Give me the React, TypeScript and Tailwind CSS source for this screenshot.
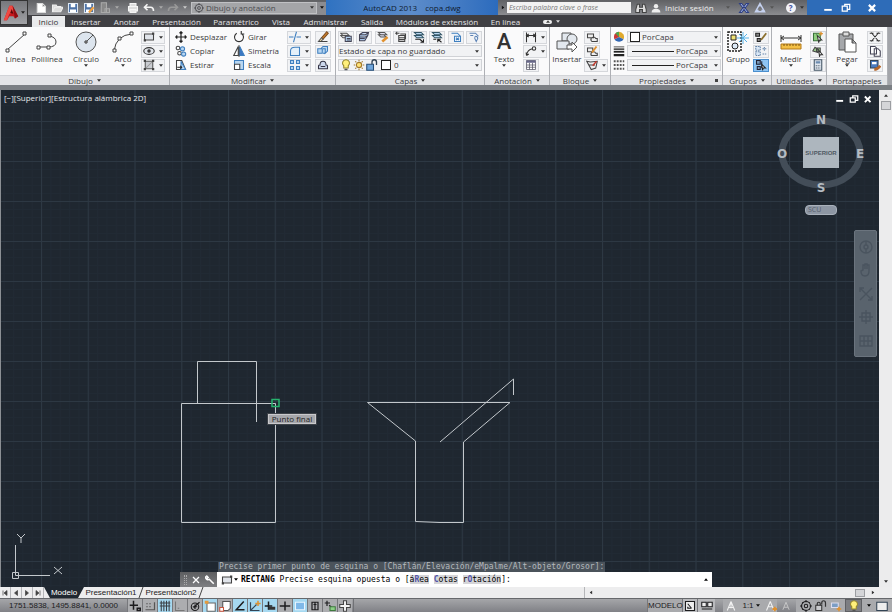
import React from "react";
import clsx from "clsx";

interface IconProps {
  className?: string;
  children: React.ReactNode;
}

// 16x16 line icon, stroke by default
function Icon({ className = "size-3", children }: IconProps) {
  return (
    <svg
      viewBox="0 0 16 16"
      className={clsx("shrink-0", className)}
      fill="none"
      stroke="currentColor"
      strokeWidth={1.4}
      aria-hidden="true"
    >
      {children}
    </svg>
  );
}

function Caret({ className = "text-[#333]" }: { className?: string }) {
  return (
    <svg viewBox="0 0 6 4" className={clsx("w-1 h-[3px] shrink-0", className)} fill="currentColor" aria-hidden="true">
      <path d="M0 0h6L3 4z" />
    </svg>
  );
}

const blue = "#3f7fbf";
const pale = "#b9d7f2";
const orange = "#e0912f";

const icons = {
  newFile: <path d="M3 2h7l4 4v8H3zM10 2v4h4" fill="#fff" stroke="#ddd" />,
  open: <path d="M2 13V4h5l1 2h5v2M2 13l3-6h11l-3 6z" fill="#ddd" stroke="#eee" />,
  save: (
    <>
      <path d="M2 2h12v12H2z" fill="#4d72a6" stroke="#dce6f2" />
      <path d="M5 2h6v5H5zM4 10h8v4H4z" fill="#fff" stroke="none" />
    </>
  ),
  saveAs: (
    <>
      <path d="M2 2h12v12H2z" fill="#4d72a6" stroke="#dce6f2" />
      <path d="M5 2h6v5H5zM4 10h5v4H4z" fill="#fff" stroke="none" />
      <path d="M8 14l6-7" stroke="#f0a040" strokeWidth={3} />
    </>
  ),
  cloud: <path d="M3 1h7v13H3zM8 9h6v5H8z" fill="#888" stroke="#aaa" />,
  print: <path d="M4 6V2h8v4M2 6h12v6H2zM4 10h8v4H4z" fill="#ddd" stroke="#f5f5f5" />,
  undo: <path d="M6 3L2 7l4 4M2 7h8q4 0 4 5" stroke="#f4f4f4" strokeWidth={2.2} />,
  redo: <path d="M10 3l4 4-4 4M14 7H6q-4 0-4 5" stroke="#999" strokeWidth={2.2} />,
  gear: (
    <>
      <circle cx="8" cy="8" r="6" />
      <circle cx="8" cy="8" r="2.3" />
      <path d="M8 0v3M8 13v3M0 8h3M13 8h3M3 3l1 1M12 12l1 1M13 3l-1 1M4 12l-1 1" />
    </>
  ),
  binoculars: (
    <path d="M3 3h3v4h4V3h3l2 7v4h-5v-4H6v4H1v-4z" fill="#ddd" stroke="#444" />
  ),
  user: (
    <>
      <circle cx="8" cy="5" r="3.5" fill="#eee" stroke="none" />
      <path d="M1 15q0-6 7-6t7 6z" fill="#eee" stroke="none" />
    </>
  ),
  exchange: <path d="M2 2h3l9 12h-3zM14 2h-3L2 14h3z" fill="#a9bde6" stroke="#2e3f85" />,
  a360: <path d="M8 2l6 11H2zM8 2v4M2 13l4-2M14 13l-4-2" stroke="#c5d1ef" strokeWidth={2} />,
  rect: (
    <>
      <path d="M2 4h12v8H2z" fill="#e0e4ea" stroke="#444" />
      <path d="M1 11h3v3H1zM12 2h3v3h-3z" fill="#444" stroke="none" />
    </>
  ),
  ellipse: (
    <>
      <ellipse cx="8" cy="8" rx="7" ry="4.5" fill="#e0e4ea" stroke="#333" />
      <circle cx="8" cy="8" r="1.6" fill="#333" />
    </>
  ),
  hatch: (
    <>
      <path d="M3 3h10v10H3z" fill="#c9ccd1" stroke="#555" />
      <path d="M4 12l8-8" stroke="#999" />
      <path d="M1 1h3v3H1zM12 1h3v3h-3zM1 12h3v3H1zM12 12h3v3h-3z" fill="#444" stroke="none" />
    </>
  ),
  move: <path d="M8 1v14M1 8h14M6 3l2-2 2 2M6 13l2 2 2-2M3 6L1 8l2 2M13 6l2 2-2 2" stroke="#222" strokeWidth={1.6} />,
  copy: (
    <>
      <circle cx="4" cy="4" r="2.4" stroke="#444" />
      <circle cx="10" cy="5" r="2.8" stroke={blue} fill={pale} />
      <circle cx="6" cy="11" r="2.4" stroke="#444" />
      <circle cx="11.5" cy="12" r="2.8" stroke={blue} fill={pale} />
    </>
  ),
  stretch: (
    <>
      <path d="M2 2h7l5 12H2z" fill="#fff" stroke="#444" />
      <path d="M8 3l6 11H8z" fill={pale} stroke={blue} />
      <path d="M3 11h6M7 9l2 2-2 2" stroke="#222" />
    </>
  ),
  rotate: <path d="M5 3a6 6 0 1 0 6 0M11 0v4h4" stroke="#333" strokeWidth={1.5} />,
  mirror: (
    <>
      <path d="M7 2v12H1z" fill="#fff" stroke="#444" />
      <path d="M9 2v12h6z" fill="#3a76c4" stroke={blue} />
      <path d="M8 0v16" stroke="#222" strokeWidth={1} />
    </>
  ),
  scale: (
    <>
      <path d="M2 2h12v12H2z" fill={pale} stroke={blue} />
      <path d="M2 7h7v7H2z" fill="#fff" stroke="#444" />
    </>
  ),
  trim: <path d="M0 8h6M10 8h6M10 1L6 15" stroke={blue} />,
  fillet: <path d="M2 14V8q0-5 6-5h6v11z" fill="#e4f0fa" stroke={blue} />,
  array: <path d="M2 2h4v4H2zM10 2h4v4h-4zM2 10h4v4H2zM10 10h4v4h-4z" fill={pale} stroke={blue} />,
  erase: (
    <>
      <path d="M6 9l7-8 2 2-7 8z" fill="#c77c2b" stroke="#7b4a1c" />
      <path d="M6 9l2 2-3 3H2z" fill="#f1dca8" stroke="#555" />
      <path d="M3 14h11" stroke="#444" />
    </>
  ),
  explode: <path d="M1 5h6v6H1zM5 5l3-3h6v6l-4 4M8 5h3v6H8" fill={pale} stroke={blue} />,
  offset: <path d="M2 13V9q0-1 2-1 0-5 4-5t4 5q2 0 2 1v4zM5 10h6" stroke="#334" fill="#ccd8ec" />,
  layerProps: (
    <>
      <path d="M1 3h8l3 3H4zM1 6h8l3 3H4z" fill="#ddd" stroke="#555" />
      <path d="M7 7h8v7H7z" fill={pale} stroke="#445" />
      <path d="M9 10h5M9 12h5" stroke="#445" />
    </>
  ),
  layerPile: <path d="M2 5l4-3h8l-1 4-4 7H2zM2 5h8l4-3M2 8h8l3-2M2 10h7" fill="#a9c6ea" stroke="#445" />,
  layerMatch: (
    <>
      <path d="M2 2h8l3 3H5zM2 5h7l3 3H5z" fill="#dde" stroke="#555" />
      <path d="M7 14l7-6" stroke={orange} strokeWidth={3.5} />
    </>
  ),
  layerPrev: <path d="M1 3h5M3 1L1 3l2 2M5 6h8v8H5zM5 9h8M5 11.5h8M7 4h7v7" fill="#eee" stroke="#444" />,
  layerIso: (
    <>
      <path d="M2 2h9l3 3H5zM2 6h9l3 3H5z" fill={pale} stroke="#356" />
      <path d="M9 11l5 4M14 11v4h-4M3 11h6" stroke="#222" />
    </>
  ),
  layerUniso: (
    <>
      <path d="M2 2h9l3 3H5zM2 6h9l3 3H5z" fill={pale} stroke="#356" />
      <path d="M14 15l-5-4M9 15v-4h4M3 11h4" stroke="#222" />
    </>
  ),
  layerFreeze: <path d="M2 3h8l4 4M6 7h8v7H6zM8 9l4 3M12 9l-4 3" fill="#eef5fc" stroke={blue} />,
  layerOff: <path d="M2 3h8l4 4M10 7q3 0 3 3l-2 4-2-4q0-3 1-3M3 6h4" fill="#eef5fc" stroke="#5d83b5" />,
  bulb: (
    <>
      <path d="M8 1a4.500 4.500 0 0 1 3 8v3H5V9a4.500 4.500 0 0 1 3-8z" fill="#fff07a" stroke="#94862e" />
      <path d="M6 14h4" stroke="#555" strokeWidth={2} />
    </>
  ),
  sun: (
    <>
      <circle cx="8" cy="8" r="3.5" fill="#ffe37a" stroke="#a3792a" />
      <path d="M8 1v2M8 13v2M1 8h2M13 8h2M3 3l1.500 1.500M11.500 11.500L13 13M13 3l-1.500 1.500M4.500 11.500L3 13" stroke="#a3792a" />
    </>
  ),
  unlock: (
    <>
      <path d="M1 7h9v8H1z" fill="#6fa5da" stroke="#274d77" />
      <path d="M8 7V4q0-3 3-3t3 3v4" stroke="#345" strokeWidth={1.8} />
    </>
  ),
  lock: (
    <>
      <path d="M1 7h8v7H1z" fill="#c9cacd" stroke="#333" />
      <path d="M3 7V5q0-2 2-2t2 2v2M9 6V4q0-3 2.500-3T14 4v5" stroke="#333" strokeWidth={1.6} />
    </>
  ),
  dim: <path d="M2 2v13M14 2v13M2 6h12M5 4L2 6l3 2M11 4l3 2-3 2" stroke="#333" />,
  leader: (
    <>
      <path d="M2 14q1-8 8-9M2 14l3-2M2 14l-.5-4" stroke="#333" />
      <circle cx="12" cy="4.5" r="2.3" stroke="#333" />
    </>
  ),
  table: (
    <>
      <path d="M2 2h12v12H2zM2 8h12M2 11h12M6 5v9M10 5v9" fill="#fff" stroke="#556" strokeWidth={1} />
      <path d="M2 2h12v3H2z" fill="#668" stroke="none" />
    </>
  ),
  blockNew: <path d="M2 9V4h8v5zM7 13a3 3 0 0 1 6-3h2v4H8z" fill="#eee" stroke="#444" />,
  blockEdit: (
    <>
      <path d="M2 4h7v5H2zM7 14a3 3 0 0 1 6-3h2v3z" fill="#eee" stroke="#444" />
      <path d="M8 10l6-8" stroke={orange} strokeWidth={2.6} />
    </>
  ),
  attrib: (
    <>
      <path d="M1 3l5 1 9-1-2 9-6 2zM4 8h8" fill="#eee" stroke="#444" />
      <path d="M9 9l5-6" stroke="#c23b2e" strokeWidth={2} />
    </>
  ),
  lineWeight: (
    <>
      <path d="M1 2.500h14" strokeWidth={1} />
      <path d="M1 5.500h14" strokeWidth={1.8} />
      <path d="M1 9h14" strokeWidth={2.4} />
      <path d="M1 13.500h14" strokeWidth={3} />
    </>
  ),
  lineType: <path d="M1 3h14M1 8h14M1 13h14" stroke="#555" strokeWidth={2.5} strokeDasharray="2.5 1.5" />,
  ungroup: (
    <>
      <path d="M1 3h5v4H1zM3 10h4v4H3z" stroke="#222" fill="#888" />
      <path d="M8 12l7-9" stroke="#8b6f2d" strokeWidth={2.4} />
    </>
  ),
  groupEdit: <path d="M1 2h6v5H1zM1 9h6v5H1zM10 5h5M12.500 2.500v5M10 12h5" fill="#dbe8f6" stroke="#6686ab" strokeDasharray="2 1" />,
  groupSel: (
    <>
      <path d="M2 2h5v5H2zM3 10h4v4H3zM9 3v9" stroke="#223" fill="#7796b5" />
      <path d="M9 7l5 5-3 0-1 3z" fill="#fff" stroke="#222" />
    </>
  ),
  quickSelect: (
    <>
      <path d="M2 3h9v10H2z" fill="#8fcf80" stroke="#38703a" />
      <path d="M7 6l6 6-3 0-1 3z" fill="#fff" stroke="#333" />
      <path d="M12 1v5M9.500 3.500h5" stroke={orange} strokeWidth={1.8} />
    </>
  ),
  selectAll: (
    <>
      <path d="M1 8l3-5 4 3v4zM6 4h5v5H6z" fill="#9acb8d" stroke="#444" />
      <path d="M9 7l5 6-3 0-1 2z" fill="#fff" stroke="#333" />
    </>
  ),
  calc: (
    <>
      <path d="M3 1h10v14H3z" fill="#e1e7ef" stroke="#456" />
      <path d="M5 3h6v3H5z" fill="#6c8cb0" stroke="none" />
      <path d="M5 9h6M5 12h6" stroke="#456" strokeDasharray="1.5 1" />
    </>
  ),
  cut: <path d="M3 2l10 12M13 2L3 14M1 3h5M1 13h5M10 3h5M10 13h5" stroke="#333" />,
  copyClip: <path d="M2 2h6l2 2v8H2zM7 5h5l3 3v7H7z" fill="#fff" stroke="#445" />,
  matchProps: (
    <>
      <path d="M2 2h10v10H2z" fill="#4a7abf" stroke="#345" />
      <path d="M4 4h6v3H4z" fill="#fff" stroke="none" />
      <path d="M7 14q4 0 8-5" stroke="#b5672c" strokeWidth={3.5} />
    </>
  ),
};

type IconName = keyof typeof icons;

function Glyph({ name, className }: { name: IconName; className?: string }) {
  return <Icon className={className}>{icons[name]}</Icon>;
}

function SmallButton({ name, split, active }: { name: IconName; split?: boolean; active?: boolean }) {
  return (
    <button
      type="button"
      aria-label={name}
      className={clsx(
        "flex items-center justify-center h-[13px] border",
        split ? "w-6 gap-1" : "w-4",
        active ? "bg-[#8fc4f2] border-[#4b8fce]" : "bg-[#f2f3f5] border-[#d5d7db]"
      )}
    >
      <Glyph name={name} />
      {split && <Caret />}
    </button>
  );
}

function BigButton({ label, caret, className, children }: {
  label: string;
  caret?: boolean;
  className: string;
  children: React.ReactNode;
}) {
  return (
    <button type="button" className={clsx("flex flex-col items-center shrink-0", className)}>
      <span className="h-6 flex items-center">{children}</span>
      <span>{label}</span>
      {caret && <Caret />}
    </button>
  );
}

function TextButton({ name, label, className }: { name: IconName; label: string; className: string }) {
  return (
    <button type="button" className={clsx("flex items-center gap-[3px] h-3.5", className)}>
      <Glyph name={name} />
      {label}
    </button>
  );
}

function Column({ children, className }: { children: React.ReactNode; className?: string }) {
  return <div className={clsx("grid grid-rows-3 h-[42px] items-center shrink-0", className)}>{children}</div>;
}

function Panel({ title, className, caret = true, launcher, children }: {
  title: string;
  className: string;
  caret?: boolean;
  launcher?: boolean;
  children: React.ReactNode;
}) {
  return (
    <section className={clsx("flex flex-col shrink-0 border-r border-[#aeb0b5]", className)}>
      <div className="flex h-12 pt-[3px] bg-[#fafafb]">{children}</div>
      <div className="flex items-center justify-center gap-1 h-[10px] bg-[#e3e4e7] border-t border-[#d2d4d8] relative">
        {title}
        {caret && <Caret />}
        {launcher && <span className="absolute right-1 size-[3px] bg-[#444]" />}
      </div>
    </section>
  );
}

function TitleBar() {
  const quick: IconName[] = ["newFile", "open", "save", "saveAs", "cloud"];
  return (
    <div className="flex items-center h-[15px] bg-linear-to-b from-[#606164] to-[#8b8c90] text-[#eee]">
      <div className="flex items-center gap-1 pl-[7px] w-[163px]">
        {quick.map((n) => (
          <button key={n} type="button" aria-label={n}><Glyph name={n} /></button>
        ))}
        <Caret className="text-[#aaa]" />
        <button type="button" aria-label="print" className="ml-1"><Glyph name="print" /></button>
        <button type="button" aria-label="undo"><Glyph name="undo" /></button>
        <Caret className="text-[#aaa]" />
        <button type="button" aria-label="redo"><Glyph name="redo" /></button>
        <Caret className="text-[#ccc]" />
      </div>
      <label className="flex items-center w-[126px] h-3 bg-[#a4a5a8] border border-[#c0c1c4] text-[#4b4c50] px-0.5">
        <Glyph name="gear" className="size-2.5" />
        <select aria-label="Espacio de trabajo" className="appearance-none grow ml-0.5">
          <option>Dibujo y anotación</option>
        </select>
        <Caret />
      </label>
      <button type="button" aria-label="Personalizar" className="flex items-center justify-center w-[9px] h-3 bg-[#8b8c90]">
        <Caret className="text-[#111]" />
      </button>
      <div className="flex items-center justify-center gap-2 grow h-full bg-linear-to-r from-[#2f72c1] via-[#5c8cca] to-[#2b6bbd] text-[#101c30]">
        <span>AutoCAD 2013</span>
        <span>copa.dwg</span>
      </div>
      <button type="button" aria-label="Buscar" className="flex items-center justify-center w-[9px] h-3">
        <Caret className="text-[#111] -rotate-90" />
      </button>
      <input
        aria-label="Buscar en la ayuda"
        placeholder="Escriba palabra clave o frase"
        className="w-[124px] h-[11px] bg-[#f2f2f2] px-0.5 italic text-[7px] text-[#777] placeholder:text-[#777]"
      />
      <div className="flex items-center w-[176px] pl-1 gap-1">
        <button type="button" aria-label="Buscar"><Glyph name="binoculars" /></button>
        <button type="button" className="flex items-center gap-1">
          <Glyph name="user" className="size-2.5" />
          Iniciar sesión
        </button>
        <Caret className="ml-2 text-[#555]" />
        <button type="button" aria-label="Exchange" className="ml-1"><Glyph name="exchange" /></button>
        <button type="button" aria-label="Autodesk 360"><Glyph name="a360" /></button>
        <Caret className="text-[#555]" />
        <button
          type="button"
          aria-label="Ayuda"
          className="flex items-center justify-center ml-2 size-2.5 rounded-full bg-[#f3f3f8] text-[#3b4fa0] font-bold"
        >
          ?
        </button>
        <Caret className="text-[#333]" />
      </div>
      <div className="flex items-center h-full w-[85px] pl-4 gap-2 bg-[#2e6cb8] text-white">
        <button type="button" aria-label="Minimizar"><Icon className="size-2.5"><path d="M2 11h12" strokeWidth={3} /></Icon></button>
        <button type="button" aria-label="Restaurar"><Icon className="size-2.5"><path d="M2 5h8v8H2zM6 5V2h8v8h-4" strokeWidth={2} /></Icon></button>
        <button type="button" aria-label="Cerrar" className="ml-2"><Icon className="size-2.5"><path d="M3 3l10 10M13 3L3 13" strokeWidth={3.5} /></Icon></button>
      </div>
    </div>
  );
}

const menuTabs = [
  { label: "Insertar", w: "w-[42px]" },
  { label: "Anotar", w: "w-[39px]" },
  { label: "Presentación", w: "w-[61px]" },
  { label: "Paramétrico", w: "w-[58px]" },
  { label: "Vista", w: "w-8" },
  { label: "Administrar", w: "w-[57px]" },
  { label: "Salida", w: "w-9" },
  { label: "Módulos de extensión", w: "w-[94px]" },
  { label: "En línea", w: "w-[43px]" },
];

function TabBar() {
  return (
    <nav className="flex items-end h-3 bg-[#3f3f43] text-[#e4e4e6] pl-1">
      <button type="button" className="w-[33px] h-[11px] bg-[#e9eaec] text-[#333]">Inicio</button>
      {menuTabs.map((t) => (
        <button key={t.label} type="button" className={clsx("h-[11px] whitespace-nowrap", t.w)}>{t.label}</button>
      ))}
      <button type="button" aria-label="Minimizar cinta" className="flex items-center gap-1 h-[11px] ml-4">
        <span className="flex items-center justify-center w-[9px] h-1 rounded-xs bg-[#eee]">
          <Caret className="text-[#444] rotate-180" />
        </span>
        <Caret className="text-[#ddd]" />
      </button>
    </nav>
  );
}

function Header() {
  return (
    <header className="flex bg-[#3f3f43]">
      <button type="button" aria-label="Menú de la aplicación" className="flex items-center gap-0.5 w-7 h-[25px] px-0.5 bg-linear-to-b from-[#77787c] to-[#a1a2a6] border border-[#333]">
        <svg viewBox="0 0 20 20" className="size-[18px]" aria-hidden="true">
          <path d="M1 19L8 1h4l7 13-4 3-2-3H8l-3 5z" fill="#c8171c" />
          <path d="M8 1h4l1 8-5 2-3 8H1z" fill="#ee4a42" />
          <path d="M12 1l7 13-4 3z" fill="#8d0d12" />
          <path d="M9 10l2-5 2 6z" fill="#5c070b" />
        </svg>
        <Caret className="text-[#222]" />
      </button>
      <div className="grow flex flex-col">
        <TitleBar />
        <TabBar />
      </div>
    </header>
  );
}

function PropertySelect({ label, line }: { label: string; line?: boolean }) {
  return (
    <label className="flex items-center h-3 bg-[#f1f2f4] border border-[#d0d2d6] px-0.5 gap-0.5">
      {line ? <span className="grow h-px bg-[#222] ml-0.5" /> : <span className="size-2.5 border border-[#222] bg-white" />}
      <select aria-label={label} className={clsx("appearance-none", line ? "w-9" : "grow")}>
        <option>PorCapa</option>
      </select>
      <Caret />
    </label>
  );
}

const layerTools: IconName[] = [
  "layerProps",
  "layerPile",
  "layerMatch",
  "layerPrev",
  "layerIso",
  "layerUniso",
  "layerFreeze",
  "layerOff",
];

function Ribbon() {
  return (
    <div className="flex h-[58px] bg-[#a3a5aa] text-[#3a3a3c]">
      <Panel title="Dibujo" className="w-[170px]">
        <BigButton label="Línea" className="w-[31px]">
          <svg viewBox="0 0 22 22" className="size-[22px]" fill="#fff" stroke="#444">
            <path d="M2 19L20 3" />
            <path d="M1 18h3v3H1zM18 1h3v3h-3z" />
          </svg>
        </BigButton>
        <BigButton label="Polilínea" className="w-8">
          <svg viewBox="0 0 22 22" className="size-[22px]" fill="none" stroke="#444">
            <path d="M2 16h10q8 0 8-5t-7-6" />
            <path d="M1 15h3v3H1zM11 15h3v3h-3zM12 3h3v3h-3z" fill="#fff" />
          </svg>
        </BigButton>
        <BigButton label="Círculo" caret className="w-[46px]">
          <svg viewBox="0 0 22 22" className="size-[22px]" fill="none" stroke="#555">
            <circle cx="11" cy="11" r="10" fill="#dde5ee" />
            <path d="M11 11l7-7" />
            <path d="M10 10h2v2h-2z" fill="#fff" stroke="#333" />
          </svg>
        </BigButton>
        <BigButton label="Arco" caret className="w-7">
          <svg viewBox="0 0 22 22" className="size-[22px]" fill="none" stroke="#444">
            <path d="M2 20Q4 4 20 3" />
            <path d="M1 18h3v3H1zM6 6h3v3H6zM18 1h3v3h-3z" fill="#fff" />
          </svg>
        </BigButton>
        <Column className="ml-1">
          <SmallButton name="rect" split />
          <SmallButton name="ellipse" split />
          <SmallButton name="hatch" split />
        </Column>
      </Panel>

      <Panel title="Modificar" className="w-[166px]">
        <Column className="ml-[5px] w-[58px]">
          <TextButton name="move" label="Desplazar" className="w-14" />
          <TextButton name="copy" label="Copiar" className="w-14" />
          <TextButton name="stretch" label="Estirar" className="w-14" />
        </Column>
        <Column className="w-[54px]">
          <TextButton name="rotate" label="Girar" className="w-12" />
          <TextButton name="mirror" label="Simetría" className="w-12" />
          <TextButton name="scale" label="Escala" className="w-12" />
        </Column>
        <Column>
          <SmallButton name="trim" split />
          <SmallButton name="fillet" split />
          <SmallButton name="array" split />
        </Column>
        <Column className="ml-1">
          <SmallButton name="erase" />
          <SmallButton name="explode" />
          <SmallButton name="offset" />
        </Column>
      </Panel>

      <Panel title="Capas" className="w-[149px]">
        <Column className="w-full px-0.5">
          <div className="flex justify-between">
            {layerTools.map((n) => (
              <SmallButton key={n} name={n} />
            ))}
          </div>
          <label className="flex items-center h-3 bg-[#f1f2f4] border border-[#d0d2d6] pr-0.5">
            <select aria-label="Estado de capa" className="appearance-none grow">
              <option>Estado de capa no guardado</option>
            </select>
            <Caret />
          </label>
          <label className="flex items-center gap-px h-3 pl-px pr-0.5 bg-[#f1f2f4] border border-[#d0d2d6]">
            <Glyph name="bulb" />
            <Glyph name="sun" />
            <Glyph name="unlock" />
            <span className="size-[10px] shrink-0 ml-0.5 bg-white border border-[#222]" />
            <select aria-label="Capa" className="appearance-none grow ml-0.5">
              <option>0</option>
            </select>
            <Caret />
          </label>
        </Column>
      </Panel>

      <Panel title="Anotación" className="w-[65px]">
        <BigButton label="Texto" caret className="w-[38px]">
          <span className="font-['Roboto',sans-serif] text-[22px] leading-6 font-medium text-[#333]">A</span>
        </BigButton>
        <Column>
          <SmallButton name="dim" split />
          <SmallButton name="leader" split />
          <SmallButton name="table" />
        </Column>
      </Panel>

      <Panel title="Bloque" className="w-[61px]">
        <BigButton label="Insertar" className="w-[34px]">
          <svg viewBox="0 0 22 22" className="size-[22px]" fill="#e3e8ee" stroke="#555">
            <path d="M6 2h9v8H6z" />
            <circle cx="16" cy="8" r="5" />
            <path d="M1 10h12v8H1z" />
            <path d="M11 14h5v-3l5 5-5 5v-3h-5z" fill="#fff" />
          </svg>
        </BigButton>
        <Column>
          <SmallButton name="blockNew" />
          <SmallButton name="blockEdit" />
          <SmallButton name="attrib" split />
        </Column>
      </Panel>

      <Panel title="Propiedades" className="w-[112px]" launcher>
        <Column className="w-4 justify-items-center text-[#222]">
          <svg viewBox="0 0 16 16" className="size-3" aria-hidden="true">
            <path d="M8 8V1a7 7 0 0 1 6 10z" fill="#e0a92c" />
            <path d="M8 8l6 3a7 7 0 0 1-12 0z" fill="#3268b4" />
            <path d="M8 8l-6 3A7 7 0 0 1 8 1z" fill="#c93737" />
            <path d="M8 8L3 3a7 7 0 0 1 5-2z" fill="#4da34b" />
          </svg>
          <Glyph name="lineWeight" />
          <Glyph name="lineType" />
        </Column>
        <Column className="w-[94px]">
          <PropertySelect label="Color" />
          <PropertySelect label="Grosor de línea" line />
          <PropertySelect label="Tipo de línea" line />
        </Column>
      </Panel>

      <Panel title="Grupos" className="w-[49px]">
        <BigButton label="Grupo" className="w-[30px]">
          <svg viewBox="0 0 22 22" className="size-[22px]" fill="none" stroke="#222">
            <path d="M1 1h13v19H1z" strokeDasharray="2 1" strokeWidth={1.5} />
            <path d="M4 4h5v5H4z" fill="#f0e275" />
            <circle cx="8" cy="15" r="3" fill="#dbe8f6" />
            <path d="M16 1v12M10 7h12M12 3l8 8M20 3l-8 8" stroke="#58b4e8" />
          </svg>
        </BigButton>
        <Column>
          <SmallButton name="ungroup" />
          <SmallButton name="groupEdit" />
          <SmallButton name="groupSel" active />
        </Column>
      </Panel>

      <Panel title="Utilidades" className="w-[55px]">
        <BigButton label="Medir" caret className="w-[38px]">
          <svg viewBox="0 0 22 22" className="size-[22px]" fill="none" stroke="#333">
            <path d="M1 4v7M21 4v7M1 7h20M4 5L1 7l3 2M18 5l3 2-3 2" />
            <path d="M1 13h20v5H1z" fill="#f3bf45" stroke="#b47a1b" />
            <path d="M4 13v2M7 13v2M10 13v2M13 13v2M16 13v2M19 13v2" stroke="#7d5413" />
          </svg>
        </BigButton>
        <Column>
          <SmallButton name="quickSelect" />
          <SmallButton name="selectAll" />
          <SmallButton name="calc" />
        </Column>
      </Panel>

      <Panel title="Portapapeles" className="w-[61px]" caret={false}>
        <BigButton label="Pegar" caret className="w-10">
          <svg viewBox="0 0 22 22" className="size-[22px]" fill="#a6a8ab" stroke="#555">
            <path d="M3 3h14v16H3z" />
            <path d="M7 1h6v4H7z" fill="#ddd" />
            <path d="M9 8h7l4 4v9H9zM16 8v4h4" fill="#fff" />
          </svg>
        </BigButton>
        <Column>
          <SmallButton name="cut" />
          <SmallButton name="copyClip" />
          <SmallButton name="matchProps" />
        </Column>
      </Panel>
    </div>
  );
}

function ModelSpace() {
  return (
    <svg className="absolute inset-0 size-full" aria-hidden="true">
      <defs>
        <pattern id="minor" x="41" y="31" width="9.35" height="8" patternUnits="userSpaceOnUse">
          <path d="M.5 0v8M0 .5h9.350" stroke="#212a34" fill="none" />
        </pattern>
        <pattern id="major" x="41" y="31" width="46.75" height="40" patternUnits="userSpaceOnUse">
          <path d="M.5 0v40M0 .5h46.750" stroke="#2d3843" fill="none" />
        </pattern>
      </defs>
      <rect width="100%" height="100%" fill="url(#minor)" />
      <rect width="100%" height="100%" fill="url(#major)" />
      <path d="M.5 0v2000" stroke="#8b8f94" />
      <g fill="none" stroke="#c3c8cc">
        <path d="M197.500 313V271.500H256.500V332" />
        <path d="M181.500 313.500H275.500V432.500H181.500z" />
        <path d="M367.500 312.500H510L463.500 352V432.500H440L415.500 431.500V351z" />
        <path d="M440 352L513.500 289V305" />
      </g>
      <path d="M272 309.500h7v7h-7z" fill="none" stroke="#27b36e" strokeWidth="1.5" />
    </svg>
  );
}

function ViewCube() {
  return (
    <div className="absolute top-5 right-[13px] w-[90px] flex flex-col items-center">
      <svg viewBox="0 0 90 86" className="w-[90px] h-[86px] font-['DejaVu_Sans',sans-serif] font-bold" fill="#b4bbc2" textAnchor="middle">
        <ellipse cx="45" cy="43" rx="39" ry="32" fill="none" stroke="#434d58" strokeWidth="7" />
        <path d="M27 27h36v31H27z" fill="#adb6be" />
        <text x="45" y="14" fontSize="12">N</text>
        <text x="45" y="82" fontSize="12">S</text>
        <text x="6" y="48" fontSize="12">O</text>
        <text x="84" y="48" fontSize="12">E</text>
        <text x="45" y="45" fontSize="6" className="font-['Liberation_Sans',sans-serif]" fill="#4f5963">SUPERIOR</text>
      </svg>
      <button type="button" className="w-8 h-2.5 mt-[9px] rounded-sm bg-[#8d96a3] border border-[#a9b1bb] text-[#56606d] text-[7px] leading-2 text-left pl-0.5">
        SCU
      </button>
    </div>
  );
}

function NavigationBar() {
  return (
    <div className="absolute top-[140px] right-0.5 w-[23px] h-[127px] flex flex-col items-center justify-evenly rounded-xs bg-[#59636d] border border-[#6b747e] text-[#4a545f]">
      <Icon className="size-4"><circle cx="8" cy="8" r="6" /><circle cx="8" cy="8" r="2" /><path d="M8 2v4M8 10v4" /></Icon>
      <Icon className="size-4"><path d="M5 8V3h2v4V2h2v5V3h2v6q0 5-4 5T3 9z" /></Icon>
      <Icon className="size-4"><path d="M2 2l12 12M14 2L2 14M2 6V2h4M10 14h4v-4" /></Icon>
      <Icon className="size-4"><path d="M8 1v14M1 8h14M4 4h8v8H4z" /></Icon>
      <Icon className="size-4"><path d="M2 3h12v10H2zM2 8h12M6 3v10M10 3v10" /></Icon>
    </div>
  );
}

function CommandLine() {
  return (
    <div className="absolute left-[180px] bottom-0 w-[532px] font-['DejaVu_Sans_Mono',monospace]">
      <p className="inline-block ml-[38px] h-[10px] px-px leading-[10px] bg-[#4b535b] text-[#b4b9be] whitespace-nowrap align-bottom">
        Precise primer punto de esquina o [Chaflán/Elevación/eMpalme/Alt-objeto/Grosor]:
      </p>
      <div className="flex items-center h-[15px] bg-white text-black">
        <div className="flex items-center justify-between h-full w-[37px] pl-1 pr-0.5 bg-linear-to-b from-[#5d5e60] to-[#7e7f82] text-white shrink-0">
          <span className="h-2.5 w-[3px] border-x border-dotted border-[#aaa]" />
          <button type="button" aria-label="Cerrar"><Icon className="size-2"><path d="M2 2l12 12M14 2L2 14" strokeWidth={2.5} /></Icon></button>
          <button type="button" aria-label="Opciones"><Icon className="size-2.5"><path d="M14 14L6 6M2 1l3 3-2 2-2-2a4 4 0 0 0 6 3" strokeWidth={2.5} /></Icon></button>
        </div>
        <Glyph name="rect" className="size-3 ml-1" />
        <Caret className="mx-px" />
        <p className="ml-0.5 grow">
          <b>RECTANG</b> Precise esquina opuesta o [
          <span className="bg-[#d5d5d8]">á<b className="text-[#5355a8]">R</b>ea</span>{" "}
          <span className="bg-[#d5d5d8]"><b className="text-[#5355a8]">C</b>otas</span>{" "}
          <span className="bg-[#d5d5d8]">r<b className="text-[#5355a8]">O</b>tación</span>]:
        </p>
        <button type="button" aria-label="Historial" className="pr-1 flex"><Caret className="rotate-180 text-black" /></button>
      </div>
    </div>
  );
}

function Viewport() {
  return (
    <main className="flex grow min-h-0 border-t-[5px] border-[#7b7f84]">
      <div className="relative grow overflow-hidden bg-[#1f2730]">
        <ModelSpace />
        <p className="absolute top-1 left-1 leading-2 text-[#e6e9ec]">[−][Superior][Estructura alámbrica 2D]</p>
        <div className="absolute top-1 right-1.5 flex gap-1 text-white">
          <button type="button" aria-label="Minimizar vista"><Icon className="size-2.5"><path d="M2 11h11" strokeWidth={3} /></Icon></button>
          <button type="button" aria-label="Restaurar vista"><Icon className="size-2.5"><path d="M2 6h8v7H2zM6 6V3h8v7h-4" strokeWidth={2} /></Icon></button>
          <button type="button" aria-label="Cerrar vista"><Icon className="size-2.5"><path d="M3 4l9 9M12 4l-9 9" strokeWidth={3} /></Icon></button>
        </div>
        <ViewCube />
        <NavigationBar />
        <div className="absolute left-[267px] top-[323px] w-[50px] h-3 flex items-center justify-center bg-[#a6a7ab] border border-[#3d4248] outline outline-[#c9c9cc] -outline-offset-2 text-[#222] whitespace-nowrap">
          Punto final
        </div>
        <svg viewBox="0 0 66 54" className="absolute left-0 bottom-0 w-[66px] h-[54px]" fill="none" stroke="#c3c8cc">
          <path d="M15.500 42.500V12M15.500 42.500H50M12.500 39.500h6v6h-6zM54 34l8 7M62 34l-8 7M17 1l4 4 4-4M21 5v5" />
        </svg>
        <CommandLine />
      </div>
      <div className="flex flex-col items-center justify-between w-[13px] bg-[#ececed] py-1 shrink-0">
        <div className="flex flex-col items-center gap-1">
          <Caret className="rotate-180 text-[#333]" />
          <span className="w-[10px] h-[9px] bg-[#d4d5d8] border border-[#9c9ea2]" />
        </div>
        <Caret className="text-[#333]" />
      </div>
    </main>
  );
}

function LayoutTabs() {
  return (
    <div className="flex items-center h-[11px] bg-[#ededee] text-[#222] font-['Liberation_Sans',sans-serif]">
      <div className="flex w-11 h-full text-[#444]">
        {["M4 3v10M12 3L6 8l6 5z", "M11 3L5 8l6 5z", "M5 3l6 5-6 5z", "M12 3v10M4 3l6 5-6 5z"].map((d) => (
          <button key={d} type="button" aria-label="Desplazar fichas" className="w-[11px] flex items-center justify-center border-r border-[#b5b6b9]">
            <Icon className="size-2"><path d={d} fill="currentColor" /></Icon>
          </button>
        ))}
      </div>
      <svg viewBox="0 0 6 11" className="w-1.5 h-[11px]"><path d="M0 0h6v11z" fill="#1f2730" /></svg>
      <button type="button" className="w-7 h-full bg-[#1f2730] text-white">Modelo</button>
      <svg viewBox="0 0 6 11" className="w-1.5 h-[11px]"><path d="M0 0h6L0 11z" fill="#1f2730" /></svg>
      <button type="button" className="w-[54px]">Presentación1</button>
      <svg viewBox="0 0 6 11" className="w-1.5 h-[11px]"><path d="M5 0L1 11" stroke="#444" /></svg>
      <button type="button" className="w-[54px]">Presentación2</button>
      <svg viewBox="0 0 6 11" className="w-1.5 h-[11px]"><path d="M5 0L1 11" stroke="#444" /></svg>
      <div className="grow" />
      <div className="flex items-center justify-between w-[295px] h-full px-1 border-l border-[#b5b6b9] mr-[13px]">
        <Caret className="rotate-90 text-[#333]" />
        <div className="flex items-center gap-1.5">
          <span className="w-[10px] h-2 bg-[#d4d5d8] border border-[#9c9ea2]" />
          <Caret className="-rotate-90 text-[#333]" />
        </div>
      </div>
    </div>
  );
}

const toggles = [
  { label: "Inferir", on: false, icon: <path d="M6 1v12M1 7h11M4 7h4M11 11h4v3h-4z" strokeWidth={2} /> },
  { label: "Forzcursor", on: false, icon: <path d="M3 5h2M7 5h2M3 9h2M7 9h2M2 13h12V3" stroke="#555" strokeWidth={1.6} /> },
  { label: "Rejilla", on: true, icon: <path d="M3 1v14M6.500 1v14M10 1v14M13.500 1v14M1 4h14M1 8h14" stroke="#3b3f45" /> },
  { label: "Orto", on: false, icon: <path d="M2 2v12h12M5 11h2" stroke="#777" /> },
  {
    label: "Polar",
    on: false,
    icon: (
      <>
        <circle cx="8" cy="9" r="5" />
        <path d="M6 10l8-7M8 6v6M5 9h6" strokeWidth={1.6} />
      </>
    ),
  },
  {
    label: "Refent",
    on: true,
    icon: (
      <>
        <path d="M4 4h11v11H4z" fill="#fff" stroke="#666" />
        <path d="M1 1h5v4H1z" fill="#e59a3c" stroke="none" />
      </>
    ),
  },
  {
    label: "Refent 3D",
    on: false,
    icon: (
      <>
        <path d="M5 2h10v9l-3 3H5z" fill="#fff" stroke="#555" />
        <path d="M1 10h5v5H1z" fill="#fff" stroke="#c9553f" />
      </>
    ),
  },
  { label: "Rastreo", on: true, icon: <path d="M13 2L3 13h11" strokeWidth={2} /> },
  {
    label: "SCPD",
    on: true,
    icon: (
      <>
        <path d="M2 3v11h12M2 14l8-8" stroke="#345" strokeWidth={1.6} />
        <path d="M12 1v7M8.500 4.500h7" stroke={orange} strokeWidth={2} />
      </>
    ),
  },
  {
    label: "Din",
    on: true,
    icon: (
      <>
        <path d="M6 2v11M1 8h10" strokeWidth={2} />
        <path d="M6 9h9v4H6z" fill="#333" stroke="none" />
      </>
    ),
  },
  { label: "Grl", on: false, icon: <path d="M8 2v12M1 8h14" strokeWidth={2} /> },
  { label: "Trp", on: true, icon: <path d="M2 3h12v10H2z" fill="#7fb8e8" stroke="#e8f4fd" /> },
  { label: "PR", on: false, icon: <path d="M4 3h8v10H4zM8 3v10M6 6h4" strokeWidth={1.6} /> },
  {
    label: "CS",
    on: false,
    icon: (
      <>
        <path d="M1 4h7M4 1v7M7 7l3 3" strokeWidth={1.6} />
        <path d="M8 9h7v5H8z" fill="#8ccf86" stroke="#3f7a3f" />
      </>
    ),
  },
  { label: "SU", on: false, icon: <path d="M6 1h4v5h5v4h-5v5H6v-5H1V6h5z" fill="#f4f4f4" stroke="#444" /> },
];

function StatusBar() {
  return (
    <footer className="flex items-center h-[14px] bg-linear-to-b from-[#a5a6a9] to-[#808186] text-[#1c1c1e] font-['Liberation_Sans',sans-serif] border-t border-[#66686c]">
      <p className="w-[127px] pl-[9px]">1751.5838, 1495.8841, 0.0000</p>
      <div className="flex h-full border-r border-[#707175]">
        {toggles.map((t) => (
          <button
            key={t.label}
            type="button"
            aria-label={t.label}
            aria-pressed={t.on}
            className={clsx(
              "flex items-center justify-center w-[15px] h-full border-l border-[#77787c]",
              t.on ? "bg-[#a5d8f0]" : "bg-[#acadb0]"
            )}
          >
            <Icon>{t.icon}</Icon>
          </button>
        ))}
        <span className="w-px" />
      </div>
      <div className="grow" />
      <button type="button" className="h-full w-9 bg-[#a9aaad] border-x border-[#77787c]">MODELO</button>
      <button type="button" aria-label="Presentación" className="h-full w-[15px] flex items-center justify-center bg-[#b9babd] border-r border-[#77787c]"><Icon><path d="M2 2h12v12H2zM5 5l5 6M5 9v2h5" fill="#eee" /></Icon></button>
      <button type="button" aria-label="Vistas rápidas" className="h-full w-[17px] flex items-center justify-center bg-[#b9babd]"><Icon><path d="M1 3h6v6H1zM9 3h6v6H9zM1 12h14" fill="#eee" /></Icon></button>
      <div className="flex items-center justify-between h-full w-[54px] ml-2 pl-0.5 bg-[#a9aaad]">
        <Icon><path d="M8 2L3 14M8 2l5 12M8 2v9M5 10h6" stroke="#f2f2f2" /></Icon>
        <button type="button" className="flex items-center gap-0.5">1:1<Caret className="text-[#111]" /></button>
        <Icon><path d="M7 2L2 14M7 2l5 12M5 9h4" stroke="#f2f2f2" /><path d="M13 9v6M10 12h6" stroke={orange} strokeWidth={2.5} /></Icon>
      </div>
      <div className="w-[9px] ml-1 mr-0.5"><Icon className="size-2.5"><path d="M8 2L3 14M8 2l5 12M5 10h6" stroke="#ccc" /></Icon></div>
      <div className="flex items-center gap-[3px] h-full ml-1 px-1 bg-[#a9aaad]">
        <Glyph name="gear" />
        <Glyph name="lock" />
        <Icon><path d="M2 4h9v6H2z" fill="#7b9dc4" stroke="#dde" /><path d="M9 12h6M12 9v6" stroke={orange} strokeWidth={2} /></Icon>
        <button type="button" aria-label="Aislar objetos" className="flex items-center justify-center w-[17px] h-full bg-[#7d7e82] border border-[#5f6064]"><Glyph name="bulb" /></button>
        <Caret className="mx-0.5 text-black" />
        <button type="button" aria-label="Limpiar pantalla"><Icon><path d="M1 3h14v11H1z" fill="#eee" stroke="#345" /></Icon></button>
      </div>
    </footer>
  );
}

export default function App() {
  return (
    <div className="flex flex-col h-screen overflow-hidden text-[8px] leading-[10px] font-['Open_Sans',sans-serif] whitespace-nowrap">
      <Header />
      <Ribbon />
      <Viewport />
      <LayoutTabs />
      <StatusBar />
    </div>
  );
}
